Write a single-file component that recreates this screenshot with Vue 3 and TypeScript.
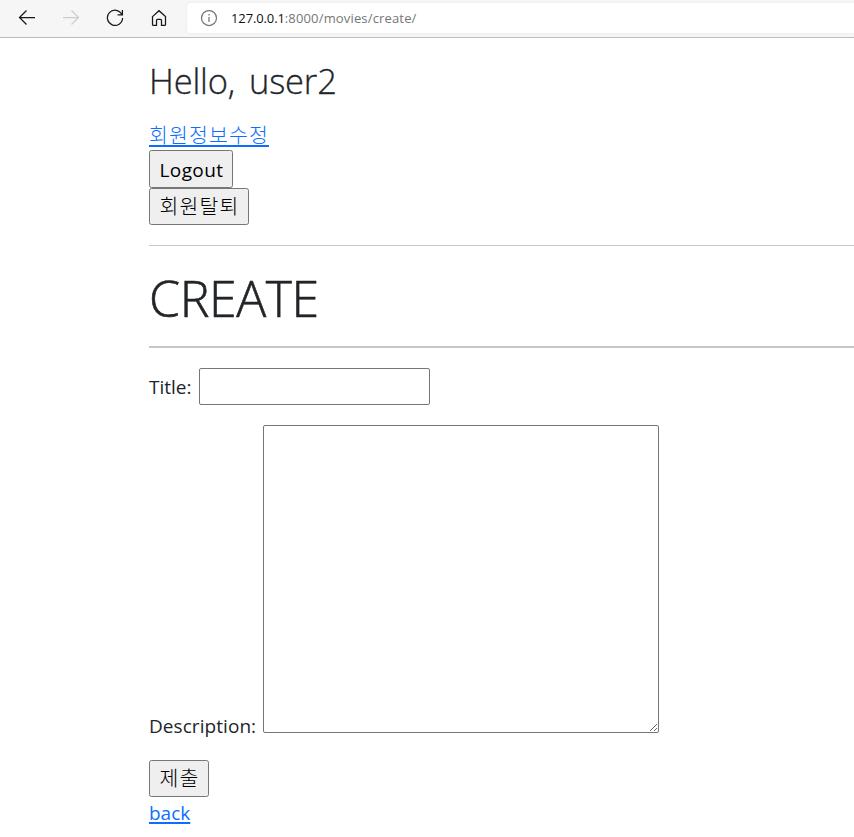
<script setup lang="ts">
import { ref } from 'vue'

const username = 'user2'
const title = ref('')
const description = ref('')
</script>

<template>
  <div class="window">
    <header class="toolbar">
      <button class="nav" aria-label="Back">
        <svg viewBox="0 0 18 18"><path d="M17 8.5H1.5M8.5 1.5L1.5 8.5l7 7" /></svg>
      </button>
      <button class="nav muted" aria-label="Forward">
        <svg viewBox="0 0 18 18"><path d="M1 8.5h15.5M9.5 1.5l7 7-7 7" /></svg>
      </button>
      <button class="nav" aria-label="Refresh">
        <svg viewBox="0 0 18 18"><path d="M15.8 5.4A7.6 7.6 0 1 0 16.6 9M16.4 1v4.8h-4.8" /></svg>
      </button>
      <button class="nav" aria-label="Home">
        <svg viewBox="0 0 18 18"><path d="M2.5 7.6L9 1.7l6.5 5.9v7.9q0 .9-1 .9h-3v-5q0-1-1-1h-3q-1 0-1 1v5h-3q-1 0-1-.9z" /></svg>
      </button>
      <div class="address">
        <svg class="info" viewBox="0 0 18 18"><circle cx="9" cy="9" r="7.5" /><path d="M9 8v5M9 5v1.5" /></svg>
        <span class="url"><b>127.0.0.1</b>:8000/movies/create/</span>
      </div>
    </header>

    <main class="page">
      <h3>Hello, {{ username }}</h3>
      <div class="link-row"><a class="ko" href="#">회원정보수정</a></div>
      <button class="btn logout"><span>Logout</span></button>
      <button class="btn withdraw ko"><span>회원탈퇴</span></button>
      <hr>
      <h1>CREATE</h1>
      <hr class="thick">
      <form @submit.prevent>
        <div class="field">
          <label class="title-label" for="title">Title:</label>
          <input id="title" v-model="title" type="text">
        </div>
        <div class="field tall">
          <label class="desc-label" for="description">Description:</label>
          <textarea id="description" v-model="description" />
        </div>
        <button class="btn submit ko"><span>제출</span></button>
      </form>
      <div class="back-row"><a href="#">back</a></div>
    </main>
  </div>
</template>

<style>
body { background: #fff; overflow: hidden; }
</style>

<style scoped>
* { box-sizing: border-box; }
.window {
  width: 100%;
  height: 837px;
  overflow: hidden;
  font-family: "Open Sans", "Noto Sans CJK KR", sans-serif;
  font-size: 19px;
  color: #212529;
}
.toolbar {
  display: flex;
  height: 38px;
  padding-left: 5px;
  background: #f6f6f6;
  border-bottom: 1px solid #bcbcbc;
}
.nav {
  display: grid;
  place-items: center;
  width: 44px;
  height: 36px;
  padding: 0;
  border: 0;
  background: none;
  color: #171717;
}
.nav svg, .info {
  width: 18px;
  height: 18px;
  fill: none;
  stroke: currentColor;
  stroke-width: 1.25;
}
.nav.muted { color: #cdcdcd; }
.address {
  display: flex;
  align-items: center;
  flex: 1;
  height: 30px;
  margin: 3px 0 0 6px;
  padding-left: 13px;
  border-radius: 4px 0 0 4px;
  background: #fff;
  box-shadow: 0 0 3px #e6e6e6;
}
.info { color: #767676; }
.url {
  padding-bottom: 1px;
  margin-left: 13px;
  font: 13px/18px "Open Sans", sans-serif;
  letter-spacing: .16px;
  color: #767676;
}
.url b { font-weight: 400; letter-spacing: -.12px; color: #111; }
.page { padding-left: 149px; }
h1, h3 { margin: 0; font-weight: 300; }
h3 {
  height: 83px;
  padding-top: 21px;
  font-size: 34.5px;
  line-height: 44px;
  word-spacing: 5px;
  letter-spacing: -.15px;
  -webkit-text-stroke: .3px #212529;
}
.link-row { height: 29px; }
.link-row a { display: block; width: max-content; line-height: 26px; }
a { color: #0d6efd; text-decoration: underline; text-decoration-thickness: 2px; text-underline-offset: 2px; }
.ko { font-family: "Noto Sans CJK KR", sans-serif; font-size: 20.5px; letter-spacing: 1.14px; font-weight: 300; }
.btn {
  display: block;
  height: 37px;
  padding: 0 0 0 9.5px;
  border: 1px solid #767676;
  border-radius: 2.5px;
  background: #efefef;
  color: #000;
  text-align: left;
  line-height: 31px;
}
.btn.ko span { display: block; margin-top: -3px; }
.logout { width: 84px; height: 38px; font-family: inherit; font-size: 19px; letter-spacing: .4px; line-height: 38px; }
.withdraw { width: 100px; }
.submit { width: 60px; }
hr { height: 1px; margin: 20px 0 0; border: 0; background: #c8c8c8; }
h1 {
  height: 100px;
  padding-top: 21px;
  font-size: 50px;
  line-height: 62px;
  letter-spacing: -.4px;
  -webkit-text-stroke: .6px #212529;
}
.thick { height: 2px; margin: 0; }
.field { display: flex; height: 37px; margin-top: 20px; }
.title-label { width: 50px; line-height: 39px; }
.tall { height: 308px; margin-bottom: 27px; align-items: flex-end; }
.desc-label { width: 114px; line-height: 28px; margin-bottom: -7px; letter-spacing: .06px; }
input, textarea {
  margin: 0;
  padding: 2px;
  border: 1px solid #767676;
  border-radius: 2px;
  background: #fff;
  font: inherit;
  outline: 0;
}
input { width: 231px; height: 37px; }
textarea { display: block; width: 396px; height: 308px; resize: both; }
.back-row { height: 30px; line-height: 32px; }
</style>
